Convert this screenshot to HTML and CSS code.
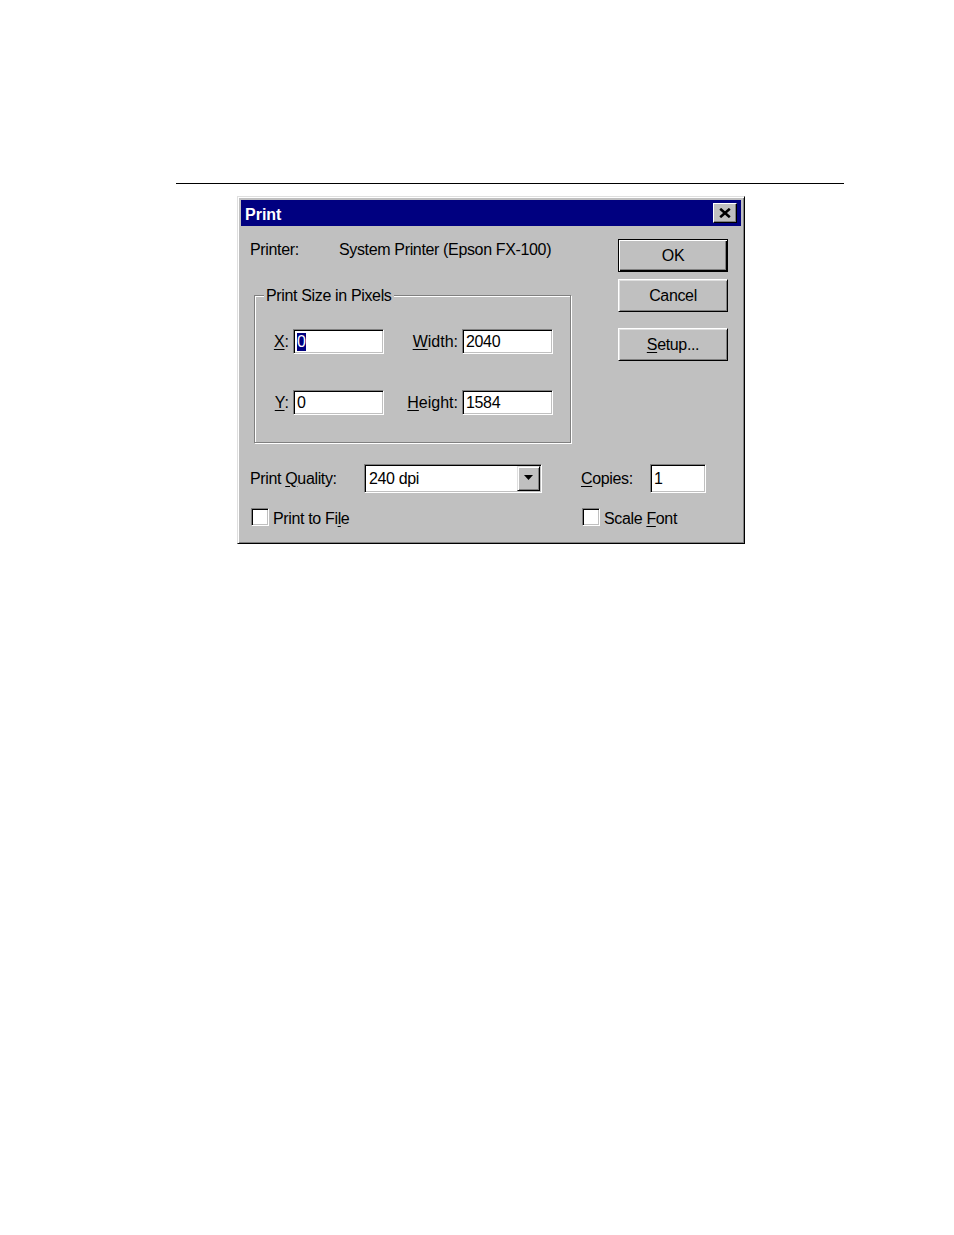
FILE: index.html
```html
<!DOCTYPE html>
<html>
<head>
<meta charset="utf-8">
<title>Print</title>
<link rel="stylesheet" href="styles.css">
</head>
<body>
<div class="rule"></div>
<div class="dialog">
  <div class="titlebar">
    <span class="title">Print</span>
    <div class="close" aria-label="Close">
      <svg width="12" height="10" viewBox="0 0 12 10"><path d="M1.2 0.8 L10.8 9.2 M10.8 0.8 L1.2 9.2" stroke="#000" stroke-width="2.6" fill="none"/></svg>
    </div>
  </div>
  <div class="content">
    <div class="top">
      <div class="leftcol">
        <div class="printer-row">
          <span class="printer-label">Printer:</span>
          <span>System Printer (Epson FX-100)</span>
        </div>
        <div class="group">
          <span class="legend">Print Size in Pixels</span>
          <div class="size-grid">
            <span class="lbl"><u>X</u>:</span>
            <div class="field"><span class="sel">0</span></div>
            <span class="lbl"><u>W</u>idth:</span>
            <div class="field">2040</div>
            <span class="lbl"><u>Y</u>:</span>
            <div class="field">0</div>
            <span class="lbl"><u>H</u>eight:</span>
            <div class="field">1584</div>
          </div>
        </div>
      </div>
      <div class="buttons">
        <div class="btn default">OK</div>
        <div class="btn">Cancel</div>
        <div class="btn setup"><u>S</u>etup...</div>
      </div>
    </div>
    <div class="quality-row">
      <span class="q-label">Print <u>Q</u>uality:</span>
      <div class="combo">
        <span class="combo-text">240 dpi</span>
        <span class="combo-btn"><svg width="9" height="5" viewBox="0 0 9 5"><polygon points="0,0 9,0 4.5,5" fill="#000"/></svg></span>
      </div>
      <span class="c-label"><u>C</u>opies:</span>
      <div class="field copies">1</div>
    </div>
    <div class="checks">
      <div class="check first"><span class="box"></span><span class="check-text">Print to Fi<u>l</u>e</span></div>
      <div class="check"><span class="box"></span><span class="check-text">Scale <u>F</u>ont</span></div>
    </div>
  </div>
</div>
</body>
</html>
```
FILE: styles.css
```css
body {
  margin: 0;
  background: #fff;
  font-family: "Liberation Sans", Arial, sans-serif;
  font-size: 16px;
  line-height: 18px;
  letter-spacing: -0.35px;
  color: #000;
}

u {
  text-underline-offset: 2px;
}

.rule {
  margin: 183px 0 0 176px;
  width: 668px;
  height: 1px;
  background: #000;
}

.dialog {
  margin: 12px 0 0 237px;
  width: 508px;
  height: 348px;
  box-sizing: border-box;
  background: #c0c0c0;
  border: 1px solid;
  border-color: #dfdfdf #000 #000 #dfdfdf;
  box-shadow: inset 1px 1px #fff, inset -1px -1px #808080;
  padding: 3px;
}

.titlebar {
  display: flex;
  align-items: flex-start;
  height: 26px;
  background: #000080;
  padding: 0 4px;
}

.title {
  color: #fff;
  font-weight: bold;
  letter-spacing: 0;
  margin-top: 6px;
}

.close {
  margin-left: auto;
  margin-top: 3px;
  width: 24px;
  height: 20px;
  box-sizing: border-box;
  background: #c0c0c0;
  border: 1px solid;
  border-color: #fff #000 #000 #fff;
  box-shadow: inset -1px -1px #808080;
  display: flex;
  align-items: center;
  justify-content: center;
}

.top {
  display: flex;
}

.leftcol {
  width: 322px;
  margin-left: 9px;
  padding-top: 15px;
}

.printer-row {
  display: flex;
  height: 18px;
}

.printer-label {
  width: 89px;
}

.group {
  position: relative;
  margin-top: 36px;
  margin-left: 4px;
  width: 317px;
  height: 148px;
  box-sizing: border-box;
  border: 1px solid #808080;
  box-shadow: 1px 1px #fff, inset 1px 1px #fff;
  padding: 33px 0 0 3px;
}

.legend {
  position: absolute;
  top: -9px;
  left: 9px;
  padding: 0 2px;
  background: #c0c0c0;
}

.size-grid {
  display: grid;
  grid-template-columns: 32px 91px 72px 91px;
  grid-auto-rows: 25px;
  column-gap: 3px;
  row-gap: 36px;
  align-items: center;
}

.lbl {
  text-align: right;
  letter-spacing: 0;
  padding-right: 1px;
}

.field {
  height: 25px;
  box-sizing: border-box;
  background: #fff;
  border: 1px solid;
  border-color: #808080 #fff #fff #808080;
  box-shadow: inset 1px 1px #000, inset -1px -1px #c0c0c0;
  padding: 0 0 0 3px;
  display: flex;
  align-items: center;
}

.sel {
  background: #000080;
  color: #fff;
}

.buttons {
  margin-left: 46px;
  padding-top: 13px;
  width: 110px;
  display: flex;
  flex-direction: column;
}

.btn {
  height: 33px;
  box-sizing: border-box;
  border: 1px solid;
  border-color: #fff #000 #000 #fff;
  box-shadow: inset 1px 1px #dfdfdf, inset -1px -1px #808080;
  display: flex;
  align-items: center;
  justify-content: center;
}

.btn.default {
  border: 1px solid #000;
  box-shadow: inset 1px 1px #fff, inset -1px -1px #000, inset -2px -2px #808080;
}

.btn + .btn {
  margin-top: 7px;
}

.btn.setup {
  margin-top: 16px;
}

.quality-row {
  display: flex;
  align-items: center;
  height: 29px;
  margin: 21px 0 0 9px;
}

.q-label {
  width: 114px;
}

.combo {
  width: 178px;
  height: 29px;
  box-sizing: border-box;
  background: #fff;
  border: 1px solid;
  border-color: #808080 #fff #fff #808080;
  box-shadow: inset 1px 1px #000, inset -1px -1px #c0c0c0;
  padding: 1px;
  display: flex;
  align-items: center;
}

.combo-text {
  margin-left: 3px;
}

.combo-btn {
  margin-left: auto;
  align-self: stretch;
  width: 23px;
  box-sizing: border-box;
  background: #c0c0c0;
  border: 1px solid;
  border-color: #dfdfdf #000 #000 #dfdfdf;
  box-shadow: inset 1px 1px #fff, inset -1px -1px #808080;
  display: flex;
  align-items: center;
  justify-content: center;
  padding-bottom: 2px;
}

.c-label {
  margin-left: 39px;
  width: 69px;
}

.field.copies {
  width: 56px;
  height: 29px;
}

.checks {
  display: flex;
  align-items: flex-start;
  margin: 15px 0 0 10px;
}

.check {
  display: flex;
  align-items: flex-start;
}

.check.first {
  width: 331px;
}

.box {
  width: 18px;
  height: 18px;
  box-sizing: border-box;
  background: #fff;
  border: 1px solid;
  border-color: #808080 #fff #fff #808080;
  box-shadow: inset 1px 1px #000, inset -1px -1px #c0c0c0;
  margin-right: 4px;
}

.check-text {
  padding-top: 2px;
}
```
